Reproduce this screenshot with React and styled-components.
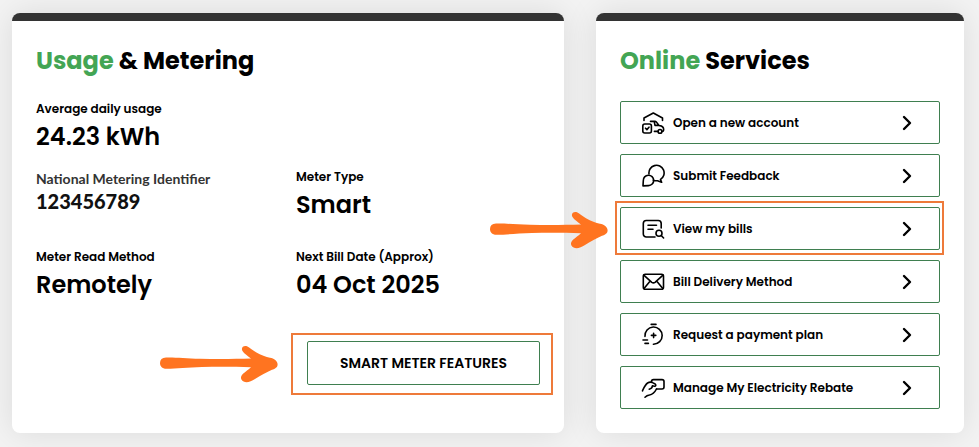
import React from 'react'
import styled, { createGlobalStyle } from 'styled-components'
import { ChevronRight } from 'lucide-react'

const services = [
    { label: 'Open a new account', icon: HomeCarIcon },
    { label: 'Submit Feedback', icon: FeedbackIcon },
    { label: 'View my bills', icon: BillIcon, marked: true },
    { label: 'Bill Delivery Method', icon: EnvelopeIcon },
    { label: 'Request a payment plan', icon: TimerIcon },
    { label: 'Manage My Electricity Rebate', icon: RebateIcon },
]

export default function App(){
    return(
        <>
            <GlobalStyle />
            <Page>
                <Card>
                    <Title><Accent>Usage</Accent> &amp; Metering</Title>
                    <Details>
                        <Field $wide>
                            <Label>Average daily usage</Label>
                            <Value>24.23 kWh</Value>
                        </Field>
                        <Field>
                            <MeterLabel>National Metering Identifier</MeterLabel>
                            <MeterValue>123456789</MeterValue>
                        </Field>
                        <Field>
                            <Label>Meter Type</Label>
                            <Value>Smart</Value>
                        </Field>
                        <Field>
                            <Label>Meter Read Method</Label>
                            <Value>Remotely</Value>
                        </Field>
                        <Field>
                            <Label>Next Bill Date (Approx)</Label>
                            <Value>04 Oct 2025</Value>
                        </Field>
                    </Details>
                    <Actions>
                        <Marked>
                            <FeatureButton type="button">SMART METER FEATURES</FeatureButton>
                            <Outline $inset="-8px -13px -10px -16px" />
                            <Arrow $gap="29px" />
                        </Marked>
                    </Actions>
                </Card>
                <Card>
                    <Title><Accent>Online</Accent> Services</Title>
                    <ServiceList>
                        {services.map(({ label, icon: Icon, marked }) => (
                            <Marked as="li" key={label}>
                                <ServiceLink href="#">
                                    <Icon />
                                    <ServiceName>{label}</ServiceName>
                                    <ChevronRight size={24} strokeWidth={2.4} />
                                </ServiceLink>
                                {marked && <Outline $inset="-6px -4px -5px -5px" />}
                                {marked && <Arrow $gap="12px" />}
                            </Marked>
                        ))}
                    </ServiceList>
                </Card>
            </Page>
        </>
    )
}

function Arrow({ $gap }){
    return(
        <ArrowSvg $gap={$gap} viewBox="0 0 118 38" aria-hidden="true">
            <path d="M6 12.6C14 12.2 26 13.6 40 13.8C58 14.2 76 14 91 13.6C88 11 84 8.600 82.500 6C80.600 2.500 83.500 .2 87 1.200C90 2.400 92 5 96 7.200C101 10 106 12 110 12.800C114 13.400 117.600 16 117.600 19.400C117.600 22.400 115 23.600 112 24.800C107 27 100 30.800 95 34C91 36.600 87 38 83.600 36.600C80 34.800 80.400 31.200 83 28.800C85.500 26.500 88.500 24.600 91 22.200C74 21.800 58 21.800 42 22C28 22.400 16 23.600 7 23.800C2 24 0 21 0 18C0 14.600 2 12.800 6 12.600Z" />
        </ArrowSvg>
    )
}

function HomeCarIcon(){
    return(
        <Icon viewBox="0 0 24 24">
            <path d="M3 9.500V7L12.300 2L21.500 7V9.500" />
            <rect x="1.800" y="13" width="8.600" height="9" rx="2" />
            <path d="M4.500 17.200L5.900 18.600L8 16.200" />
            <path d="M9.500 10.400H14.300C16 10.400 17 14.200 18.500 14.600C21 15 22.600 15.800 22.600 18V19.200C22.600 20 22 20.400 21 20.400M13.200 10.400L14 14.400H18M13.400 20.400H17" />
            <circle cx="19" cy="20.400" r="1.900" />
        </Icon>
    )
}

function FeedbackIcon(){
    return(
        <Icon viewBox="0 0 24 24">
            <path d="M8 10A7.600 7.600 0 1 1 19.500 15.400L20.600 18.300L16.500 16.700C15 16.900 13.600 16.700 12.300 16.200" />
            <path d="M2 21.900L2.300 16.700A5.200 5.200 0 1 1 7.500 21.600Z" />
        </Icon>
    )
}

function BillIcon(){
    return(
        <Icon viewBox="0 0 24 24">
            <path d="M20.200 11V6.500A3 3 0 0 0 17.200 3.500H5.300A3 3 0 0 0 2.300 6.500V17A3 3 0 0 0 5.300 20H14M7 8.300H15.500M7 12.300H12" />
            <circle cx="18" cy="16.300" r="3" />
            <path d="M20.200 18.500L22.600 21" />
        </Icon>
    )
}

function EnvelopeIcon(){
    return(
        <Icon viewBox="0 0 24 24">
            <rect x="2.300" y="4.200" width="20.200" height="15" rx="2" />
            <path d="M2.800 5.100L10.800 12.300Q12.400 13.500 14 12.300L22 5.100M3 18.500L9 11.300M21.800 18.500L15.800 11.300" />
        </Icon>
    )
}

function TimerIcon(){
    return(
        <Icon viewBox="0 0 24 24">
            <path d="M4 13.400A8.600 8.600 0 1 1 12.400 21.200M10.200 1.400H15M12.600 10.200V14.600M10.400 12.400H14.800M2 17H6.500M4 20.400H7.400" />
        </Icon>
    )
}

function RebateIcon(){
    return(
        <Icon viewBox="0 0 24 24">
            <path d="M10.500 6V5.600A2 2 0 0 1 12.500 3.600H21A2 2 0 0 1 23 5.600V11A2 2 0 0 1 21 13H15.500" />
            <path d="M1.500 14.800C3 11.500 4.200 8.600 6.600 7C8.400 5.900 10 6 11.500 6.600L14.200 8C15.400 9 14.800 10.400 13.400 10.200L11.400 9.800C11.400 11.600 10 12.800 8.200 13.200M15.500 13C13.400 17 10.800 18.600 8.400 19C6.800 19.200 5.200 20 4 21.200" />
        </Icon>
    )
}

const GlobalStyle = createGlobalStyle`
    body{
        margin:0;
        background:#F3F3F3;
        color:#000000;
        font-family: Poppins, Inter, sans-serif;
    }
    *{
        box-sizing:border-box;
    }
`;

const Page = styled.main`
    display:grid;
    grid-template-columns:3fr 2fr;
    gap:32px;
    padding:13px 15px 14px 12px;
`;

const Card = styled.section`
    min-width:0;
    padding:24px;
    background:#FFFFFF;
    border-top:8px solid #333333;
    border-radius:8px;
    box-shadow:0px 0px 32px rgba(0, 0, 0, 0.1);
`;

const Title = styled.h2`
    margin:0 0 24px;
    font-weight:700;
    font-size:24px;
    line-height:32px;
`;

const Accent = styled.span`
    color:#43A554;
`;

const Details = styled.dl`
    display:grid;
    grid-template-columns:1fr 1fr;
    gap:24px 16px;
    margin:0;
`;

const Field = styled.div`
    grid-column:${props => props.$wide ? '1 / -1' : 'auto'};
    margin-bottom:${props => props.$wide ? '-12px' : '0'};
`;

const Label = styled.dt`
    font-weight:600;
    font-size:12px;
    line-height:16px;
`;

const Value = styled.dd`
    margin:0;
    font-weight:600;
    font-size:24px;
    line-height:40px;
`;

const MeterLabel = styled(Label)`
    color:#333333;
    font-family: Lato, sans-serif;
    font-weight:700;
    font-size:14px;
    line-height:20px;
`;

const MeterValue = styled(Value)`
    color:#111111;
    font-family: Lato, sans-serif;
    font-weight:900;
    font-size:20px;
    line-height:24px;
`;

const Actions = styled.div`
    display:flex;
    justify-content:flex-end;
    margin-top:36px;
`;

const Marked = styled.div`
    position:relative;
`;

const FeatureButton = styled.button`
    height:44px;
    padding:0 32px;
    background:#FFFFFF;
    border:1px solid #3F7F50;
    border-radius:2px;
    color:#000000;
    font-family:inherit;
    font-weight:600;
    font-size:14px;
    cursor:pointer;
`;

const Outline = styled.span`
    position:absolute;
    inset:${props => props.$inset};
    border:2px solid #EE7A3A;
    pointer-events:none;
`;

const ArrowSvg = styled.svg`
    position:absolute;
    right:calc(100% + ${props => props.$gap});
    top:4px;
    width:118px;
    height:38px;
    fill:#FF7420;
    pointer-events:none;
`;

const ServiceList = styled.ul`
    display:flex;
    flex-direction:column;
    gap:10px;
    margin:0;
    padding:0;
    list-style:none;
`;

const ServiceLink = styled.a`
    display:flex;
    align-items:center;
    gap:8px;
    height:43px;
    padding:0 20px;
    border:1px solid #3F7F50;
    border-radius:2px;
    color:#000000;
    text-decoration:none;
`;

const ServiceName = styled.span`
    flex:1;
    font-weight:600;
    font-size:12px;
    line-height:16px;
`;

const Icon = styled.svg`
    flex:none;
    width:24px;
    height:24px;
    fill:none;
    stroke:#000000;
    stroke-width:1.6;
    stroke-linecap:round;
    stroke-linejoin:round;
`;
